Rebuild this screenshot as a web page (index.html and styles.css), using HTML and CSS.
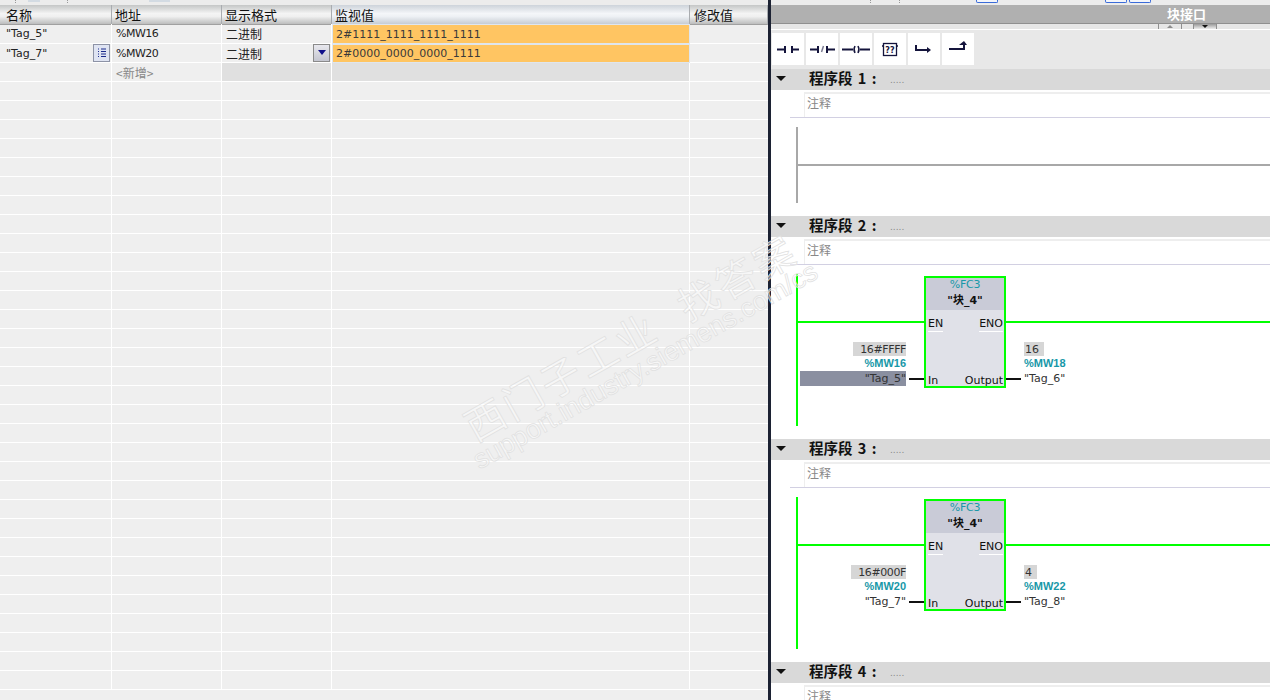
FILE: index.html
```html
<!DOCTYPE html>
<html lang="zh">
<head>
<meta charset="utf-8">
<title>监控表与程序段</title>
<link rel="stylesheet" href="styles.css">
</head>
<body>
<div class="screen">
  <section class="left">
    <div class="strip strip-left"><i class="dots"></i><b class="tabmark"></b><i class="dots"></i><b class="tabmark wide"></b></div>
    <div class="row head"><div>名称</div><div>地址</div><div>显示格式</div><div class="hot">监视值</div><div>修改值</div></div>
    <div class="row first"><div>"Tag_5"</div><div class="mw">%MW16</div><div class="cjk">二进制</div><div class="orange">2#1111_1111_1111_1111</div><div></div></div>
    <div class="row"><div class="withbtn">"Tag_7"<span class="listbtn"><svg width="14" height="14" viewBox="0 0 14 14"><path d="M3 3h1M3 5.500h1M3 8h1M3 10.500h1M6 3h5M6 5.500h5M6 8h5M6 10.500h5" stroke="#1a2a8c" fill="none"/></svg></span></div><div class="mw">%MW20</div><div class="withbtn cjk">二进制<span class="dropbtn"><svg width="10" height="6" viewBox="0 0 10 6"><path d="M1 0h8L5 5z" fill="#10108a"/></svg></span></div><div class="orange">2#0000_0000_0000_1111</div><div></div></div>
    <div class="row"><div></div><div class="muted cjk">&lt;新增&gt;</div><div class="shade"></div><div class="shade"></div><div></div></div>
    <div class="row"><i></i><i></i><i></i><i></i><i></i></div>
    <div class="row"><i></i><i></i><i></i><i></i><i></i></div>
    <div class="row"><i></i><i></i><i></i><i></i><i></i></div>
    <div class="row"><i></i><i></i><i></i><i></i><i></i></div>
    <div class="row"><i></i><i></i><i></i><i></i><i></i></div>
    <div class="row"><i></i><i></i><i></i><i></i><i></i></div>
    <div class="row"><i></i><i></i><i></i><i></i><i></i></div>
    <div class="row"><i></i><i></i><i></i><i></i><i></i></div>
    <div class="row"><i></i><i></i><i></i><i></i><i></i></div>
    <div class="row"><i></i><i></i><i></i><i></i><i></i></div>
    <div class="row"><i></i><i></i><i></i><i></i><i></i></div>
    <div class="row"><i></i><i></i><i></i><i></i><i></i></div>
    <div class="row"><i></i><i></i><i></i><i></i><i></i></div>
    <div class="row"><i></i><i></i><i></i><i></i><i></i></div>
    <div class="row"><i></i><i></i><i></i><i></i><i></i></div>
    <div class="row"><i></i><i></i><i></i><i></i><i></i></div>
    <div class="row"><i></i><i></i><i></i><i></i><i></i></div>
    <div class="row"><i></i><i></i><i></i><i></i><i></i></div>
    <div class="row"><i></i><i></i><i></i><i></i><i></i></div>
    <div class="row"><i></i><i></i><i></i><i></i><i></i></div>
    <div class="row"><i></i><i></i><i></i><i></i><i></i></div>
    <div class="row"><i></i><i></i><i></i><i></i><i></i></div>
    <div class="row"><i></i><i></i><i></i><i></i><i></i></div>
    <div class="row"><i></i><i></i><i></i><i></i><i></i></div>
    <div class="row"><i></i><i></i><i></i><i></i><i></i></div>
    <div class="row"><i></i><i></i><i></i><i></i><i></i></div>
    <div class="row"><i></i><i></i><i></i><i></i><i></i></div>
    <div class="row"><i></i><i></i><i></i><i></i><i></i></div>
    <div class="row"><i></i><i></i><i></i><i></i><i></i></div>
    <div class="row"><i></i><i></i><i></i><i></i><i></i></div>
    <div class="row"><i></i><i></i><i></i><i></i><i></i></div>
    <div class="row"><i></i><i></i><i></i><i></i><i></i></div>
  </section>
  <section class="right">
    <div class="strip strip-right"><i class="dots"></i><i class="dots"></i><b class="bluebox first"></b><b class="bluebox second"></b><b class="bluebox"></b></div>
    <div class="titlebar"><span>块接口</span></div>
    <div class="subbar"><span class="grip"><svg width="6" height="3" viewBox="0 0 6 3"><path d="M0 3h6L3 0z" fill="#8c8c8c"/></svg></span><span class="grip gap"></span><span class="grip dark"><svg width="6" height="3" viewBox="0 0 6 3"><path d="M0 0h6L3 3z" fill="#111"/></svg></span></div>
    <div class="toolbar">
      <span class="tool"><svg width="32" height="32" viewBox="0 0 32 32"><path d="M5 16.500h8M13 13v7M20 13v7M20 16.500h7" stroke="#14143c" stroke-width="2" fill="none"/></svg></span>
      <span class="tool"><svg width="32" height="32" viewBox="0 0 32 32"><path d="M4 16.500h8M12 13v7M21 13v7M21 16.500h8" stroke="#14143c" stroke-width="2" fill="none"/><path d="M15.500 19l2-6" stroke="#7a7a90" stroke-width="1.500" fill="none"/></svg></span>
      <span class="tool"><svg width="32" height="32" viewBox="0 0 32 32"><path d="M2 16.500h11M20 16.500h10" stroke="#14143c" stroke-width="2" fill="none"/><path d="M15 13q-2 3.500 0 7M18 13q2 3.500 0 7" stroke="#14143c" stroke-width="1.500" fill="none"/></svg></span>
      <span class="tool"><svg width="32" height="32" viewBox="0 0 32 32"><rect x="9.500" y="10.500" width="13" height="12" fill="none" stroke="#14143c" stroke-width="1.300"/><path d="M8 13h2M22 13h2" stroke="#14143c" stroke-width="1.500"/><text x="16" y="20" class="toolq">??</text></svg></span>
      <span class="tool"><svg width="32" height="32" viewBox="0 0 32 32"><path d="M8 12v5h12" stroke="#14143c" stroke-width="2" fill="none"/><path d="M19 14l4 3-4 3z" fill="#14143c"/></svg></span>
      <span class="tool"><svg width="32" height="32" viewBox="0 0 32 32"><path d="M7 16h15v-5" stroke="#14143c" stroke-width="2" fill="none"/><path d="M17 12l5-4 3 4z" fill="#14143c"/></svg></span>
    </div>
    <div class="networks">
      <article class="net">
        <header class="nethead"><span class="tri"></span><span class="nettitle">程序段 1 :</span><span class="netdots">.....</span></header>
        <div class="comment"><span>注释</span></div>
        <div class="ladder short">
          <i class="rail off"></i><i class="wire off"></i>
        </div>
      </article>
      <article class="net">
        <header class="nethead"><span class="tri"></span><span class="nettitle">程序段 2 :</span><span class="netdots">.....</span></header>
        <div class="comment"><span>注释</span></div>
        <div class="ladder">
          <i class="rail"></i><i class="wire"></i>
          <div class="params inp">
            <span class="val">16#FFFF</span><span class="addr">%MW16</span><span class="tag sel">"Tag_5"</span>
          </div>
          <div class="fb">
            <div class="fbhead"><span class="fbno">%FC3</span><span class="fbname">"块_4"</span></div>
            <div class="fbpins top"><span class="pin">EN</span><span class="pin">ENO</span></div>
            <div class="fbpins bottom"><span>In</span><span>Output</span></div>
          </div>
          <i class="stub l"></i><i class="stub r"></i>
          <div class="params outp">
            <span class="val">16</span><span class="addr">%MW18</span><span class="tag">"Tag_6"</span>
          </div>
        </div>
      </article>
      <article class="net">
        <header class="nethead"><span class="tri"></span><span class="nettitle">程序段 3 :</span><span class="netdots">.....</span></header>
        <div class="comment"><span>注释</span></div>
        <div class="ladder">
          <i class="rail"></i><i class="wire"></i>
          <div class="params inp">
            <span class="val">16#000F</span><span class="addr">%MW20</span><span class="tag">"Tag_7"</span>
          </div>
          <div class="fb">
            <div class="fbhead"><span class="fbno">%FC3</span><span class="fbname">"块_4"</span></div>
            <div class="fbpins top"><span class="pin">EN</span><span class="pin">ENO</span></div>
            <div class="fbpins bottom"><span>In</span><span>Output</span></div>
          </div>
          <i class="stub l"></i><i class="stub r"></i>
          <div class="params outp">
            <span class="val">4</span><span class="addr">%MW22</span><span class="tag">"Tag_8"</span>
          </div>
        </div>
      </article>
      <article class="net">
        <header class="nethead"><span class="tri"></span><span class="nettitle">程序段 4 :</span><span class="netdots">.....</span></header>
        <div class="comment"><span>注释</span></div>
      </article>
    </div>
  </section>
  <div class="divider"></div>
  <div class="watermark" aria-hidden="true">
    <span class="wm-cn a">西门子工业</span>
    <span class="wm-cn b">找答案</span>
    <span class="wm-en">support.industry.siemens.com/cs</span>
  </div>
</div>
</body>
</html>
```
FILE: styles.css
```css
* { box-sizing: border-box; }
html, body { margin: 0; height: 100%; overflow: hidden; }
body { font: 11px "DejaVu Sans", "Noto Sans CJK SC", sans-serif; color: #222; }
.screen { position: relative; display: flex; width: 1270px; height: 700px; overflow: hidden; background: #fff; }

.left { width: 768px; flex: none; background: #efefef; overflow: hidden; }
.divider { position: absolute; left: 768px; top: 0; width: 3px; height: 700px; background: #1c2233; }
.right { margin-left: 3px; flex: 1; min-width: 0; overflow: hidden; }

.strip { height: 5px; background: #ececec; position: relative; display: flex; }
.dots { width: 1px; height: 3px; background: repeating-linear-gradient(#999 0 1px, transparent 1px 2px); }
.strip-left { padding-left: 15px; }
.tabmark { width: 12px; height: 2px; margin: 0 27px 0 12px; background: #d3dbe3; }
.tabmark.wide { width: 21px; margin-left: 81px; }
.strip-right { padding-left: 99px; }
.strip-right .dots + .dots { margin-left: 28px; }
.bluebox { width: 22px; height: 3px; border: 1px solid #3a6bd8; border-top: 0; background: #f4f6fb; border-radius: 0 0 2px 2px; margin-left: 2px; }
.bluebox.first { margin-left: 76px; }
.bluebox.second { margin-left: 107px; }

.row { display: grid; grid-template-columns: 112px 110px 110px 358px 78px; height: 19px; }
.row.first { height: 20px; }
.row > * { display: flex; align-items: center; padding-left: 4px; border-right: 1px solid #fff; border-bottom: 1px solid #fff; white-space: nowrap; position: relative; }
.row > :first-child { padding-left: 6px; }
.row > :last-child { border-right: 0; }
.row.head > * { background: linear-gradient(#c4c6c6, #f4f4f4 45%, #f0f0f0 60%, #bcbdbd); border-right: 1px solid #a9acb0; border-bottom: 1px solid #a0a0a0; font-size: 13px; font-family: "Noto Sans CJK SC", sans-serif; color: #111; padding-left: 3px; }
.row.head > :first-child { padding-left: 6px; }
.row.head > :last-child { padding-left: 4px; }
.row.head .hot { background: linear-gradient(#cdd3da, #f4f6f9 45%, #eef1f5 60%, #c6ccd3); }
.mw { letter-spacing: -.5px; }
.cjk { font-family: "Noto Sans CJK SC", sans-serif; font-size: 12px; }
.row > .orange { background: #ffc562; border: 1px solid #dfe6ee; color: #3a3a3a; padding-left: 3px; }
.shade { background: #e0e0e0; }
.muted { color: #888; }
.withbtn { justify-content: space-between; padding-right: 1px; }
.listbtn { width: 17px; height: 18px; border: 1px solid #8d93a6; background: #dfe4f2; display: flex; align-items: center; justify-content: center; }
.dropbtn { width: 17px; height: 18px; border: 1px solid #8a8a8a; background: linear-gradient(#e8e8ee, #c4c6d0); display: flex; align-items: center; justify-content: center; }

.titlebar { height: 18px; background: #b0b0b0; color: #fff; font: bold 13px/18px "Noto Sans CJK SC", sans-serif; padding-left: 396px; }
.subbar { box-sizing: content-box; height: 5px; background: #e6e6e6; border-top: 1px solid #8f8f8f; border-bottom: 1px solid #fff; display: flex; padding-left: 387px; }
.grip { width: 24px; height: 5px; border: solid #8f8f8f; border-width: 0 1px; display: flex; justify-content: center; align-items: center; }
.grip.gap { width: 11px; border-width: 0; }
.grip.dark { background: linear-gradient(#9a9a9a, #eee); }
.toolbar { height: 39px; background: #e8e8e8; display: flex; gap: 2px; padding: 3px 0 0 1px; }
.tool { width: 32px; height: 32px; background: #fff; }
.tool svg { display: block; }
.toolq { font: bold 8px "DejaVu Sans", sans-serif; fill: #14143c; text-anchor: middle; }

.networks { background: #fff; }
.nethead { height: 21px; background: #d9d9d9; display: flex; align-items: center; }
.tri { width: 0; height: 0; margin: -3px 0 0 5px; border: 5px solid transparent; border-top: 5px solid #111; border-bottom: 0; }
.nettitle { margin: -3px 0 0 23px; font: bold 14.500px/18px "Noto Sans CJK SC", sans-serif; word-spacing: 2px; color: #111; width: 81px; white-space: nowrap; }
.netdots { color: #888; font-size: 9px; }
.comment { height: 28px; margin-left: 19px; border-bottom: 1px solid #d2d0e2; padding: 2px 0 0 14px; }
.comment span { display: block; height: 25px; border: solid #eee; border-width: 2px 0 0 1px; color: #888; font: 12px/18px "Noto Sans CJK SC", sans-serif; padding: 0 2px; }

.ladder { position: relative; height: 174px; }
.ladder.short { height: 98px; }
.rail { position: absolute; left: 25px; top: 9px; width: 2px; height: 152px; background: #00ff00; }
.wire { position: absolute; left: 27px; top: 56px; right: 0; height: 2px; background: #00ff00; }
.short .rail { height: 76px; }
.short .wire { top: 46px; }
.rail.off, .wire.off { background: #a8a8a8; }

.fb { position: absolute; left: 153px; top: 11px; width: 82px; height: 112px; border: 2px solid #00ff00; background: #e0e1e8; }
.fbhead { height: 32px; background: #c9cbd7; display: flex; flex-direction: column; align-items: center; }
.fbno { color: #1898a8; line-height: 13px; letter-spacing: -.3px; }
.fbname { font: bold 11px/20px "DejaVu Sans", "Noto Sans CJK SC", sans-serif; color: #111; }
.fbpins { display: flex; justify-content: space-between; padding: 0 1px 0 2px; color: #111; }
.fbpins.top { margin-top: 6px; }
.pin { border-bottom: 1px solid #fff; height: 16px; line-height: 15px; }
.fbpins.bottom { margin-top: 41px; line-height: 15px; }
.stub { position: absolute; top: 113px; width: 15px; height: 2px; background: #111; }
.stub.l { left: 138px; }
.stub.r { left: 235px; }
.params { position: absolute; top: 77px; display: flex; flex-direction: column; line-height: 15px; }
.inp { left: 29px; align-items: flex-end; width: 106px; }
.outp { left: 253px; align-items: flex-start; }
.val { background: #d6d6d6; padding: 0 0 0 7px; height: 14px; color: #333; line-height: 15px; letter-spacing: -.4px; }
.outp .val { padding: 0 5px 0 1px; letter-spacing: 0; }
.addr { color: #1898a8; font-weight: bold; font-family: "Liberation Sans", sans-serif; }
.tag { color: #333; white-space: nowrap; }
.tag.sel { background: #8a8fa0; align-self: stretch; text-align: right; }

.watermark { position: absolute; inset: 0; pointer-events: none; overflow: hidden; }
.watermark span { position: absolute; transform-origin: 0 50%; transform: rotate(-29.500deg); white-space: nowrap; color: rgba(255,255,255,.45); -webkit-text-stroke: .7px #e0e0e0; }
.wm-cn { font: 40px/40px "Noto Sans CJK SC", sans-serif; letter-spacing: 3px; }
.wm-cn.a { left: 467px; top: 408px; }
.wm-cn.b { left: 680px; top: 288px; }
.wm-en { left: 475px; top: 447px; font: 27px/30px "Liberation Sans", sans-serif; }
```
